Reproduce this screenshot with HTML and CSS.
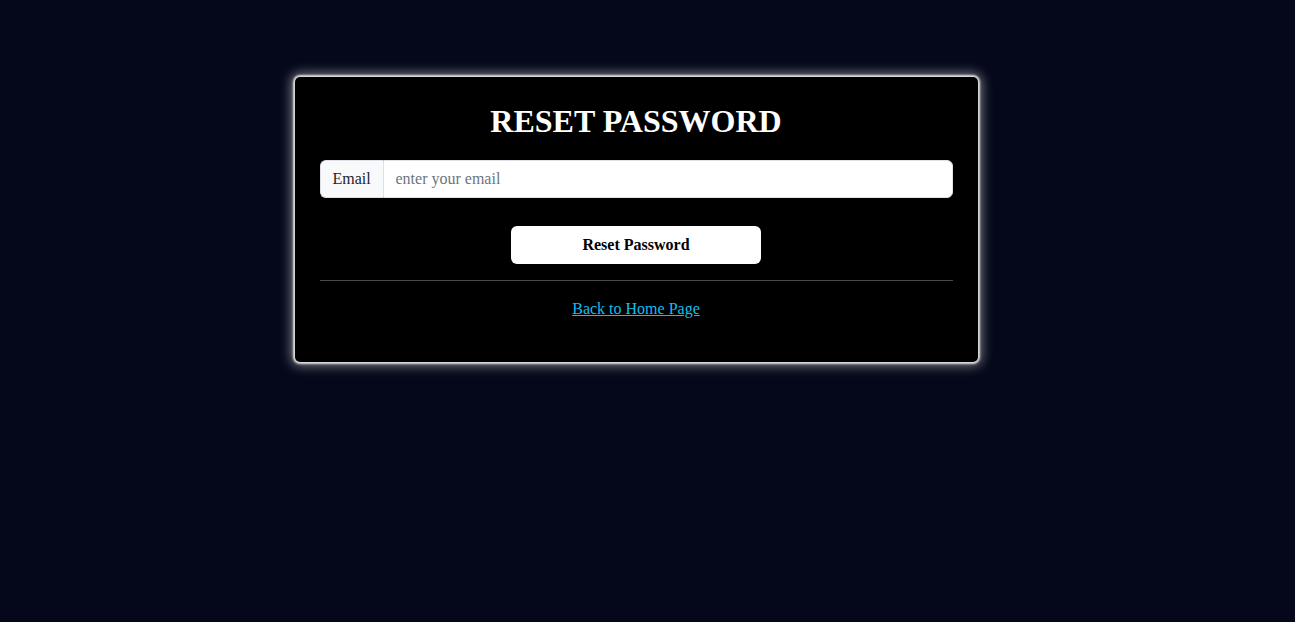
FILE: index.html
```html
<!DOCTYPE html>
<html>
<head>
<meta charset="utf-8">
<link rel="stylesheet" href="styles.css">
</head>
<body>
<div class="page">
  <div class="card">
    <h1 class="title">RESET PASSWORD</h1>
    <div class="input-group">
      <span class="addon">Email</span>
      <input class="field" type="email" placeholder="enter your email">
    </div>
    <div class="actions">
      <button class="btn">Reset Password</button>
    </div>
    <hr class="divider">
    <div class="back"><a href="#">Back to Home Page</a></div>
  </div>
</div>
</body>
</html>
```
FILE: styles.css
```css
html, body {
  margin: 0;
  padding: 0;
  background: #05081a;
  font-family: "Liberation Serif", "Times New Roman", serif;
  height: 100%;
}
.page {
  display: flex;
  justify-content: center;
  padding: 77px 23px 0 0;
}
.card {
  box-sizing: border-box;
  width: 683px;
  height: 285px;
  background: #000;
  border-radius: 5px;
  box-shadow: 0 0 2px 2px #ddd, 0 0 12px 4px rgba(255,255,255,0.45);
  padding: 25px 25px;
  display: flex;
  flex-direction: column;
}
.title {
  margin: 0;
  color: #fff;
  font-size: 32px;
  font-weight: bold;
  text-align: center;
  line-height: 38px;
  margin-bottom: 20px;
}
.input-group {
  display: flex;
  height: 38px;
}
.addon {
  box-sizing: border-box;
  display: flex;
  align-items: center;
  padding: 0 12px;
  width: 63px;
  background: #f8f9fa;
  border: 1px solid #dee2e6;
  border-right: none;
  border-radius: 6px 0 0 6px;
  color: #212529;
  font-size: 16px;
}
.field {
  box-sizing: border-box;
  flex: 1;
  height: 38px;
  border: 1px solid #dee2e6;
  border-radius: 0 6px 6px 0;
  padding: 0 12px;
  font-family: "Liberation Serif", "Times New Roman", serif;
  font-size: 16px;
  color: #212529;
  background: #fff;
  outline: none;
}
.field::placeholder {
  color: #6c757d;
}
.actions {
  display: flex;
  justify-content: center;
  margin-top: 28px;
}
.btn {
  width: 250px;
  height: 38px;
  background: #fff;
  border: none;
  border-radius: 6px;
  font-family: "Liberation Serif", "Times New Roman", serif;
  font-weight: bold;
  font-size: 16px;
  color: #000;
  cursor: pointer;
}
.divider {
  margin: 16px 0 0 0;
  border: none;
  border-top: 1px solid #4a4a4a;
  height: 0;
}
.back {
  text-align: center;
  margin-top: 19px;
  font-size: 16px;
}
.back a {
  color: #10bff0;
  text-decoration: underline;
}
```
